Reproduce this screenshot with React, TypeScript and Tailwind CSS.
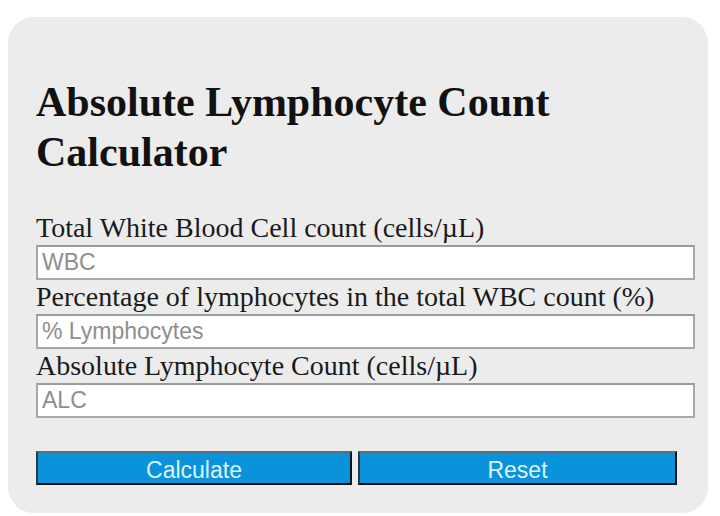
import React, { useState } from 'react';

const serif = { fontFamily: '"Liberation Serif", "Times New Roman", serif' };
const sans = { fontFamily: '"Liberation Sans", Arial, sans-serif' };

export default function App() {
  const [wbc, setWbc] = useState('');
  const [pct, setPct] = useState('');
  const [alc, setAlc] = useState('');

  const calculate = () => {
    const w = parseFloat(wbc);
    const p = parseFloat(pct);
    if (!isNaN(w) && !isNaN(p)) setAlc(String((w * p) / 100));
  };

  const reset = () => {
    setWbc('');
    setPct('');
    setAlc('');
  };

  const inputCls =
    'block w-full h-[35px] px-[4px] bg-white border-2 border-[#a8a8a8] border-t-[#9a9a9a] text-[23px] text-[#333] placeholder:text-[#8e8e8e] outline-none';

  return (
    <div className="w-[720px] h-[516px] bg-white pt-[17px] pl-[8px]">
      <div className="w-[700px] h-[496px] bg-[#ececec] rounded-[26px] pl-[28px] pr-[13px] pt-[60px]" style={serif}>
        <h2 className="text-[42px] leading-[50px] font-bold text-[#111]">
          Absolute Lymphocyte Count
          <br />
          Calculator
        </h2>

        <div className="mt-[34px] text-[28px] leading-[34px] text-[#1a1a1a]">
          <label className="block">Total White Blood Cell count (cells/µL)</label>
          <input className={inputCls} style={sans} placeholder="WBC" value={wbc} onChange={e => setWbc(e.target.value)} />
          <label className="block">Percentage of lymphocytes in the total WBC count (%)</label>
          <input className={inputCls} style={sans} placeholder="% Lymphocytes" value={pct} onChange={e => setPct(e.target.value)} />
          <label className="block">Absolute Lymphocyte Count (cells/µL)</label>
          <input className={inputCls} style={sans} placeholder="ALC" value={alc} readOnly />
        </div>

        <div className="mt-[33px] flex gap-[6px]" style={sans}>
          <button
            onClick={calculate}
            className="w-[316px] h-[34px] bg-[#0893da] border-2 border-[#111] border-t-[#56707e] border-l-[#2a3a44] text-[23px] text-[#dff4ff]"
          >
            Calculate
          </button>
          <button
            onClick={reset}
            className="w-[319px] h-[34px] bg-[#0893da] border-2 border-[#111] border-t-[#56707e] border-l-[#2a3a44] text-[23px] text-[#dff4ff]"
          >
            Reset
          </button>
        </div>
      </div>
    </div>
  );
}
